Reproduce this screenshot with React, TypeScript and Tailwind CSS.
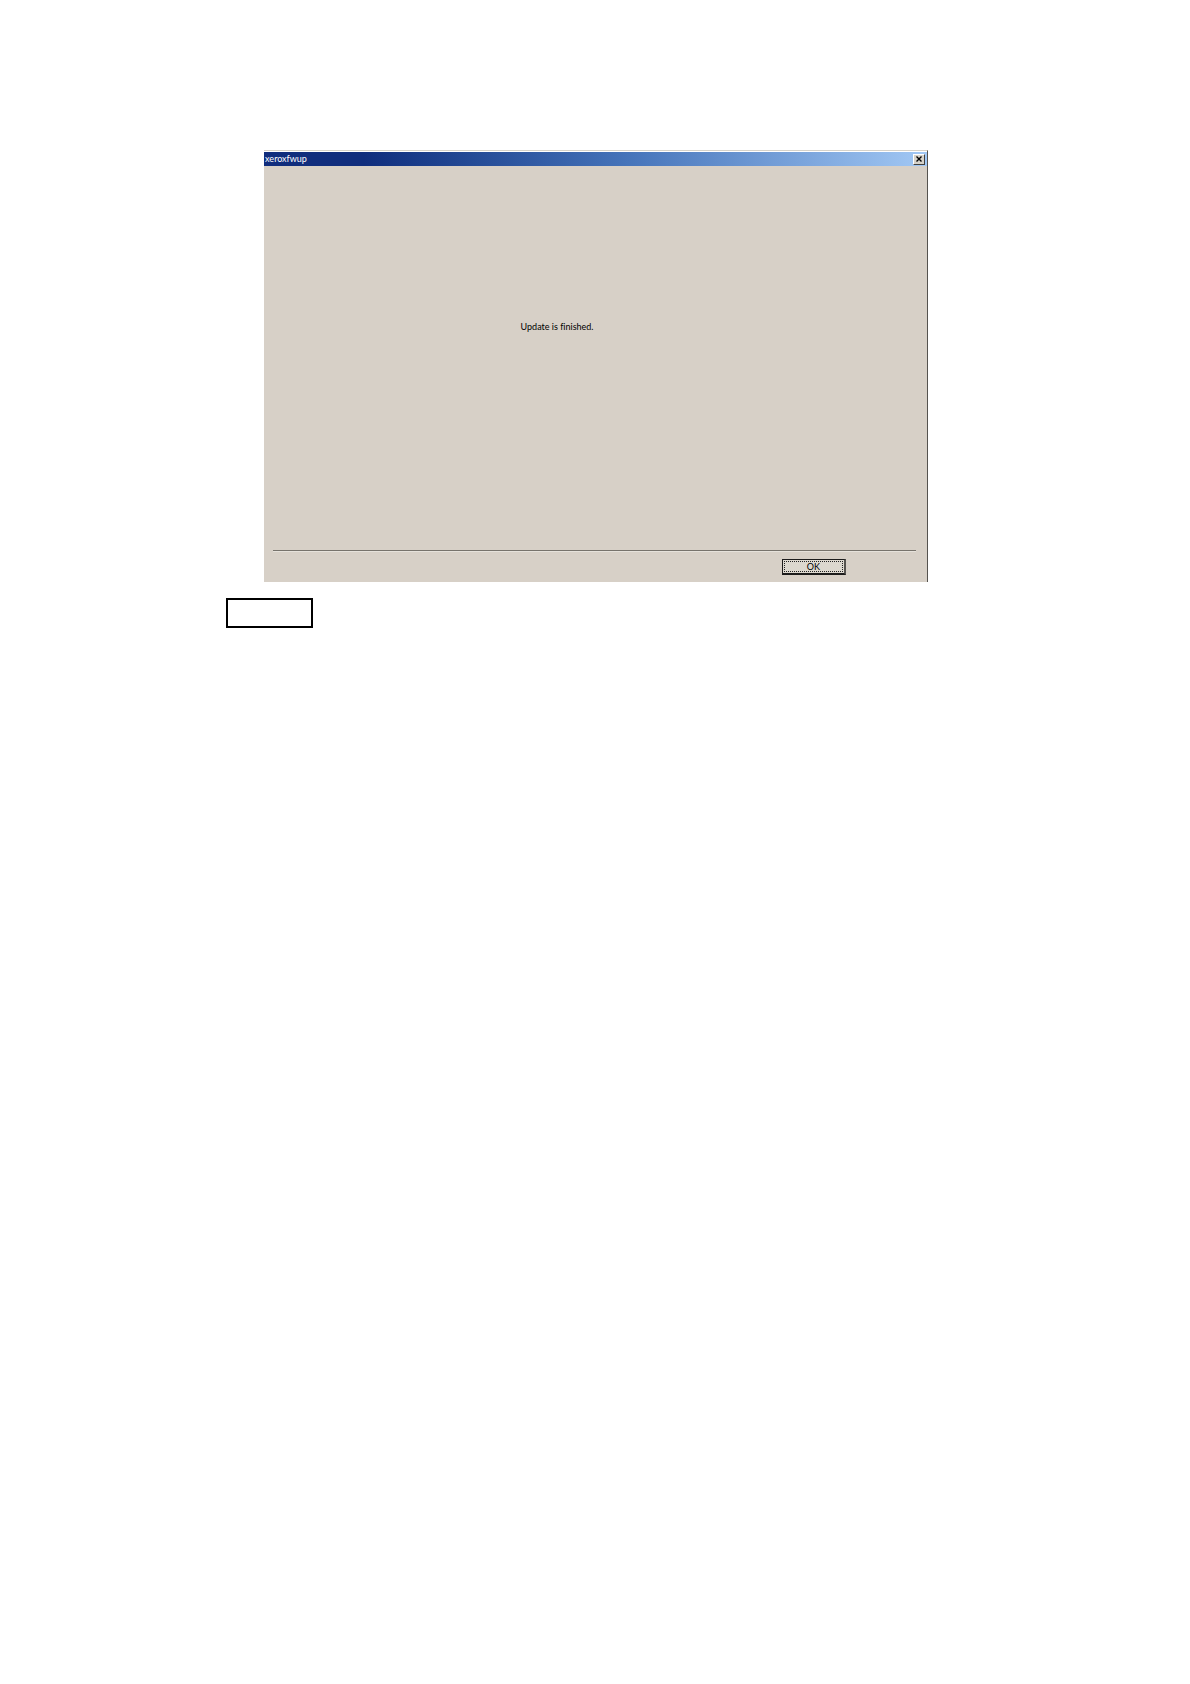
import { useState } from "react";

function TitleBar({ title, onClose }: { title: string; onClose: () => void }) {
  return (
    <div className="flex h-[14px] items-center justify-between bg-linear-to-r from-[#102d7d] from-15% via-[#4674ba] via-55% to-[#a2c8f4] pr-[2px] pl-px">
      <h1 className="text-[9px] leading-[12px] text-white">{title}</h1>
      <button
        type="button"
        aria-label="Close"
        onClick={onClose}
        className="flex h-[11px] w-[12px] items-center justify-center border border-t-white border-r-[#404040] border-b-[#404040] border-l-white bg-[#d6d2c9]"
      >
        <svg viewBox="0 0 6 6" className="size-[6px]" aria-hidden="true">
          <path d="M0.5 0.5 L5.5 5.5 M5.5 0.5 L0.5 5.5" stroke="#000" strokeWidth="1.4" />
        </svg>
      </button>
    </div>
  );
}

function UpdateDialog({ onClose }: { onClose: () => void }) {
  return (
    <section
      role="dialog"
      aria-label="xeroxfwup"
      className="border-t border-r border-t-[#d6d2c9] border-r-[#55534f] bg-[#d7d0c7]"
    >
      <div className="border-t border-white">
        <TitleBar title="xeroxfwup" onClose={onClose} />
      </div>

      <div className="pr-[11px] pl-[9px]">
        <div className="border-b border-[#77736c] pt-[155px] pb-[217px] pl-[38.5%]">
          <p className="text-[9px] leading-[12px] text-black">Update is finished.</p>
        </div>
        <div className="flex justify-end border-t border-[#e6e2db] pt-[7px] pr-[70px] pb-[7px]">
          <button
            type="button"
            onClick={onClose}
            className="h-[16px] w-[64px] border border-r-2 border-b-2 border-[#1c1c1c] border-r-[#55534f] bg-[#dcd8cf] p-px"
          >
            <span className="flex h-full items-center justify-center border border-dotted border-[#222] text-[9px] leading-[9px] text-black">
              OK
            </span>
          </button>
        </div>
      </div>
    </section>
  );
}

export default function App() {
  const [open, setOpen] = useState(true);

  return (
    <main className="min-h-screen bg-white px-[19%] pt-[150px] font-['Lato','Liberation_Sans',sans-serif] [font-variant-ligatures:none]">
      {open && (
        <div className="mr-[36px] ml-[38px]">
          <UpdateDialog onClose={() => setOpen(false)} />
        </div>
      )}
      {/* empty label frame under the figure */}
      <div className="mt-4 h-[30px] w-[87px] border-2 border-black" />
    </main>
  );
}
